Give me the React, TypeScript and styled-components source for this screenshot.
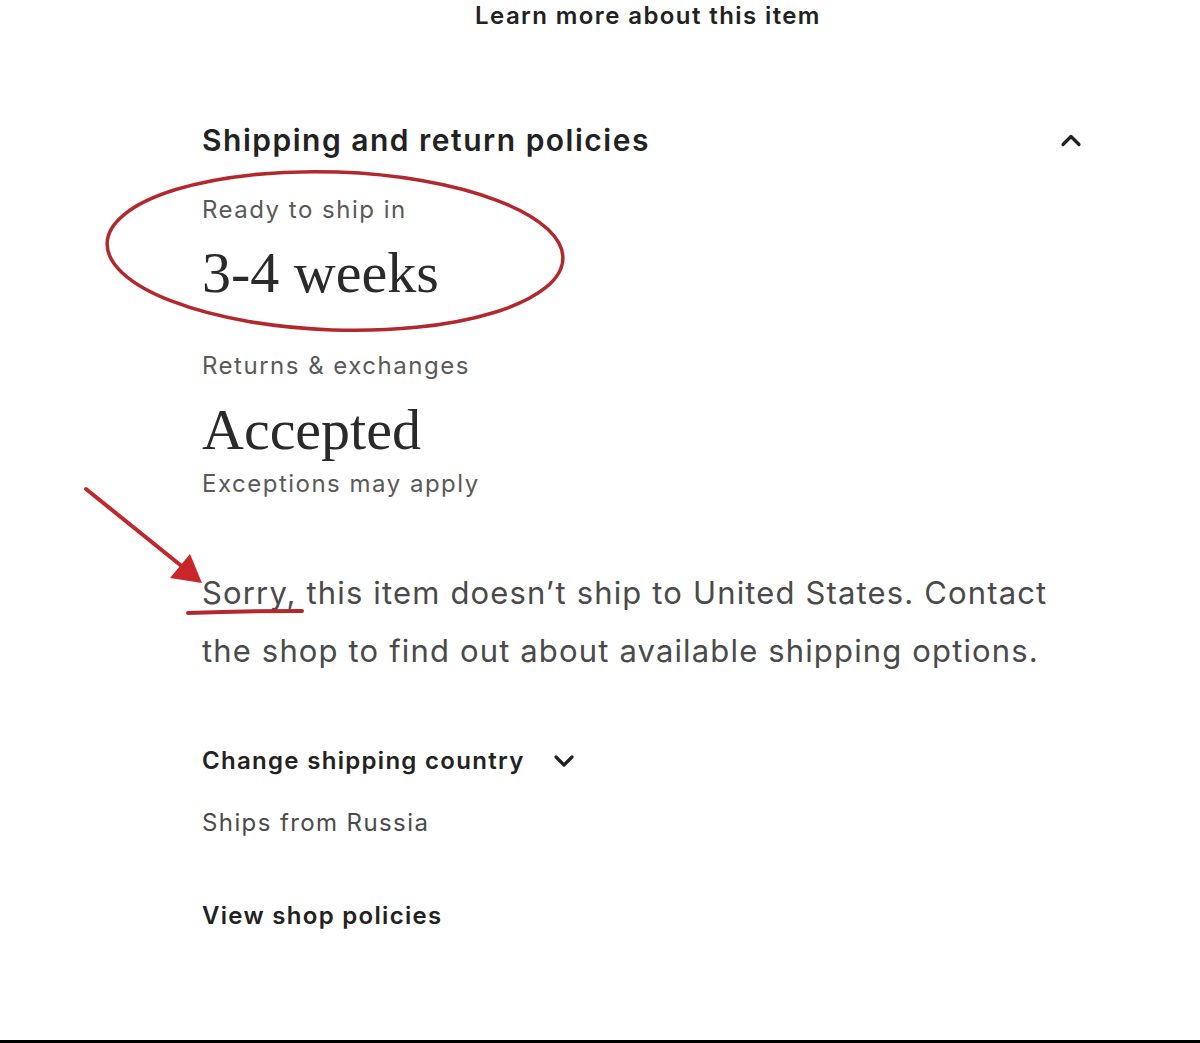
import React from 'react';
import styled, { createGlobalStyle } from 'styled-components';

const GlobalStyle = createGlobalStyle`
  html, body { margin: 0; padding: 0; background: #fff; }
  body { font-family: Inter, "Noto Sans", sans-serif; color: #222; }
`;

const Page = styled.div`
  position: relative;
  width: 1200px;
  height: 1043px;
  overflow: hidden;
  background: #fff;
`;

const TopTitle = styled.div`
  text-align: center;
  font-size: 24px;
  font-weight: 600;
  letter-spacing: 1.4px;
  line-height: 32px;
  padding-left: 96px;
  color: #222;
`;

const Panel = styled.section`
  width: 880px;
  margin: 88px 0 0 202px;
  display: flex;
  flex-direction: column;
`;

const HeaderRow = styled.div`
  display: flex;
  align-items: center;
  justify-content: space-between;
`;

const Heading = styled.h2`
  margin: 0;
  font-size: 30px;
  font-weight: 600;
  letter-spacing: 1.5px;
  line-height: 40px;
  color: #222;
`;

const Label = styled.div<{ $top?: number }>`
  margin-top: ${p => p.$top ?? 0}px;
  font-size: 24px;
  letter-spacing: 1.5px;
  line-height: 32px;
  color: #595959;
`;

const BigValue = styled.div<{ $top?: number }>`
  margin-top: ${p => p.$top ?? 0}px;
  font-family: "Liberation Serif", serif;
  font-size: 58px;
  line-height: 64px;
  color: #2a2a2a;
`;

const Notice = styled.p`
  margin: 64px 0 0;
  font-size: 31px;
  letter-spacing: 1.15px;
  line-height: 58px;
  color: #4a4a4a;
`;

const ToggleRow = styled.div`
  margin-top: 65px;
  display: flex;
  align-items: center;
  gap: 28px;
`;

const Strong = styled.div<{ $top?: number }>`
  margin-top: ${p => p.$top ?? 0}px;
  font-size: 24px;
  font-weight: 600;
  letter-spacing: 1.3px;
  line-height: 32px;
  color: #222;
`;

const Plain = styled.div`
  margin-top: 30px;
  font-size: 24px;
  letter-spacing: 1.4px;
  line-height: 32px;
  color: #4a4a4a;
`;

const Annotations = styled.svg`
  position: absolute;
  inset: 0;
  pointer-events: none;
`;

const BottomRule = styled.div`
  position: absolute;
  left: 0;
  right: 0;
  bottom: 0;
  height: 3px;
  background: #000;
`;

const Chevron = ({ up }: { up?: boolean }) => (
  <svg width="22" height="14" viewBox="0 0 22 14" fill="none">
    <path
      d={up ? 'M3 11.5L11 3.5L19 11.5' : 'M3 3L11 11L19 3'}
      stroke="#222"
      strokeWidth="3.2"
      strokeLinecap="round"
      strokeLinejoin="round"
    />
  </svg>
);

export default function App() {
  return (
    <Page>
      <GlobalStyle />
      <TopTitle>Learn more about this item</TopTitle>
      <Panel>
        <HeaderRow>
          <Heading>Shipping and return policies</Heading>
          <Chevron up />
        </HeaderRow>
        <Label $top={34}>Ready to ship in</Label>
        <BigValue $top={15}>3-4 weeks</BigValue>
        <Label $top={45}>Returns &amp; exchanges</Label>
        <BigValue $top={16}>Accepted</BigValue>
        <Label $top={6}>Exceptions may apply</Label>
        <Notice>
          Sorry, this item doesn’t ship to United States. Contact the shop to find out about available shipping options.
        </Notice>
        <ToggleRow>
          <Strong>Change shipping country</Strong>
          <Chevron />
        </ToggleRow>
        <Plain>Ships from Russia</Plain>
        <Strong $top={61}>View shop policies</Strong>
      </Panel>

      <Annotations width="1200" height="1043" viewBox="0 0 1200 1043">
        <ellipse
          cx="335"
          cy="251"
          rx="228"
          ry="79"
          transform="rotate(2 335 251)"
          fill="none"
          stroke="#b3282d"
          strokeWidth="3.5"
        />
        <line x1="86" y1="489" x2="184" y2="568" stroke="#c0282a" strokeWidth="4" strokeLinecap="round" />
        <polygon points="202,583 170,578 190,554" fill="#c8262a" />
        <path d="M188 613 Q245 611 302 611" stroke="#b3282d" strokeWidth="4" fill="none" strokeLinecap="round" />
      </Annotations>
      <BottomRule />
    </Page>
  );
}
